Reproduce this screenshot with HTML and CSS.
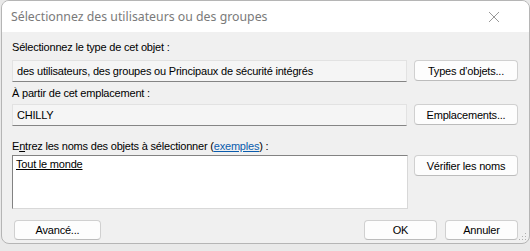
FILE: index.html
```html
<!DOCTYPE html>
<html lang="fr">
<head>
    <meta charset="UTF-8">
    <title>Sélectionnez des utilisateurs ou des groupes</title>
    <link rel="stylesheet" href="styles.css">
</head>
<body>
    <div class="window">
        <div class="titlebar">
            <span class="title">Sélectionnez des utilisateurs ou des groupes</span>
            <svg class="close" width="12" height="12" viewBox="0 0 12 12">
                <path d="M1 1 L11 11 M11 1 L1 11" stroke="#999" stroke-width="1" fill="none"/>
            </svg>
        </div>

        <div class="content">
            <div class="section type">
                <div class="label">Sélectionnez le type de cet objet :</div>
                <div class="row">
                    <div class="field">des utilisateurs, des groupes ou Principaux de sécurité intégrés</div>
                    <button class="btn side">Types d’objets...</button>
                </div>
            </div>

            <div class="section location">
                <div class="label">À partir de cet emplacement :</div>
                <div class="row">
                    <div class="field">CHILLY</div>
                    <button class="btn side">Emplacements...</button>
                </div>
            </div>

            <div class="section names-section">
                <div class="label">E<u>n</u>trez les noms des objets à sélectionner (<a href="#" class="link">exemples</a>) :</div>
                <div class="row">
                    <div class="names"><u>Tout le monde</u></div>
                    <button class="btn side">Vérifier les noms</button>
                </div>
            </div>

            <div class="footer">
                <button class="btn advanced">Avancé...</button>
                <div class="actions">
                    <button class="btn ok">OK</button>
                    <button class="btn cancel">Annuler</button>
                </div>
            </div>
        </div>

        <!-- resize grip -->
        <svg class="grip" width="8" height="8" viewBox="0 0 8 8">
            <rect x="6" y="0" width="1" height="1" fill="#b0b0b0"/>
            <rect x="3" y="3" width="1" height="1" fill="#b0b0b0"/>
            <rect x="6" y="3" width="1" height="1" fill="#b0b0b0"/>
            <rect x="0" y="6" width="1" height="1" fill="#b0b0b0"/>
            <rect x="3" y="6" width="1" height="1" fill="#b0b0b0"/>
            <rect x="6" y="6" width="1" height="1" fill="#b0b0b0"/>
        </svg>
    </div>
</body>
</html>
```

FILE: styles.css
```css
body {
    margin: 0;
    background: #e9e9e9;
    font-family: "Liberation Sans", Arial, sans-serif;
    font-size: 11px;
    letter-spacing: -0.2px;
    color: #000;
}

.window {
    position: relative;
    width: 527px;
    height: 242px;
    margin: 0 0 0 1px;
    border: 1px solid #b5b5b5;
    border-radius: 8px;
    overflow: hidden;
    display: flex;
    flex-direction: column;
    background: #f0f0f0;
}

.titlebar {
    height: 31px;
    background: #fff;
    display: flex;
    align-items: center;
    justify-content: space-between;
    padding: 0 29px 0 9px;
    flex-shrink: 0;
}

.title {
    font-family: "Noto Sans", sans-serif;
    font-size: 12.3px;
    letter-spacing: 0;
    color: #7a7a7a;
}

.content {
    flex: 1;
    padding: 8px 10px 0 10px;
}

.label {
    height: 15px;
    line-height: 15px;
    white-space: nowrap;
}

.row {
    display: flex;
    align-items: flex-start;
    justify-content: space-between;
}

.type .row {
    margin-top: 5px;
}

.location {
    margin-top: 4px;
}

.location .row {
    margin-top: 3px;
}

.names-section {
    margin-top: 13px;
}

.names-section .row {
    margin-top: 1px;
}

.field {
    width: 395px;
    height: 22px;
    line-height: 20px;
    padding-left: 4px;
    background: #f5f5f5;
    border: 1px solid #e2e2e2;
    border-bottom-color: #858585;
    box-sizing: border-box;
}

.names {
    width: 396px;
    height: 54px;
    background: #fff;
    border: 1px solid #d8d8d8;
    border-top-color: #828282;
    border-left-color: #828282;
    padding: 2px 0 0 3px;
    line-height: 13px;
    box-sizing: border-box;
}

.link {
    color: #0b5cad;
}

.btn {
    font-family: "Liberation Sans", Arial, sans-serif;
    font-size: 11px;
    letter-spacing: -0.2px;
    color: #000;
    background: #fdfdfd;
    border: 1px solid #d0d0d0;
    border-bottom-color: #bcbcbc;
    border-radius: 4px;
    height: 21px;
    padding: 0;
    box-sizing: border-box;
}

.btn.side {
    width: 104px;
    margin-right: 1px;
}

.footer {
    display: flex;
    justify-content: space-between;
    margin-top: 11px;
    padding-left: 2px;
}

.btn.advanced {
    width: 87px;
    height: 20px;
}

.actions {
    display: flex;
    gap: 8px;
    margin-right: 1px;
}

.btn.ok,
.btn.cancel {
    width: 73px;
    height: 20px;
}

.close {
    display: block;
}

.grip {
    position: absolute;
    right: 2px;
    bottom: 2px;
}
```
